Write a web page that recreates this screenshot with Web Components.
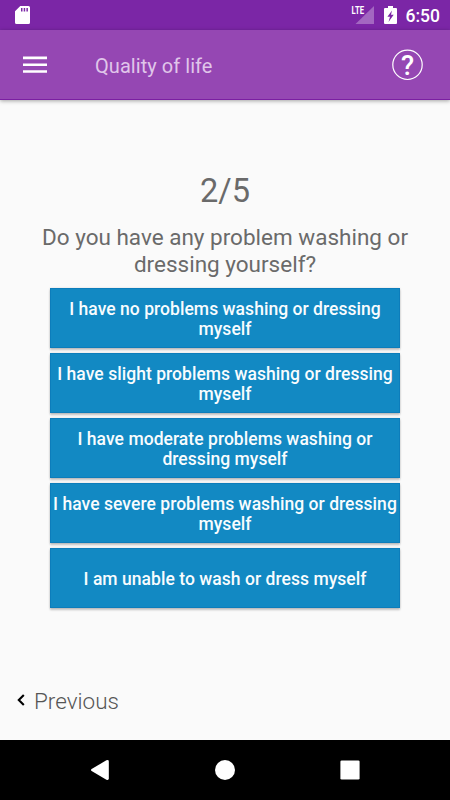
<!DOCTYPE html>
<html lang="en">
<head>
<meta charset="utf-8">
<meta name="viewport" content="width=device-width, initial-scale=1">
<title>Quality of life</title>
<style>
  body {
    margin: 0;
    font-family: Roboto, "Liberation Sans", sans-serif;
    background: #fafafa;
  }
</style>
</head>
<body>
<app-screen>
  <status-bar slot="top" time="6:50"></status-bar>
  <app-toolbar slot="top">Quality of life</app-toolbar>
  <survey-question step="2/5">
    Do you have any problem washing or dressing yourself?
    <answer-button slot="answers">I have no problems washing or dressing myself</answer-button>
    <answer-button slot="answers">I have slight problems washing or dressing myself</answer-button>
    <answer-button slot="answers">I have moderate problems washing or dressing myself</answer-button>
    <answer-button slot="answers">I have severe problems washing or dressing myself</answer-button>
    <answer-button slot="answers">I am unable to wash or dress myself</answer-button>
  </survey-question>
  <previous-link slot="bottom">Previous</previous-link>
  <navigation-bar slot="bottom"></navigation-bar>
</app-screen>

<script>
class BaseElement extends HTMLElement {
  constructor() {
    super();
    const template = document.createElement('template');
    template.innerHTML = this.constructor.markup;
    this.attachShadow({ mode: 'open' });
    this.shadowRoot.appendChild(template.content.cloneNode(true));
  }
}

class AppScreen extends BaseElement {
  static markup = `
    <style>
      :host {
        display: flex;
        flex-direction: column;
        width: 450px;
        height: 800px;
        overflow: hidden;
        background: #fafafa;
      }

      main {
        flex: 1;
        min-height: 0;
      }
    </style>
    <slot name="top"></slot>
    <main><slot></slot></main>
    <slot name="bottom"></slot>
  `;
}

class StatusBar extends BaseElement {
  static markup = `
    <style>
      :host {
        display: flex;
        flex: none;
        align-items: center;
        height: 30px;
        box-sizing: border-box;
        padding: 0 10px 0 15px;
        background: #7b26a6;
        color: #fff;
      }

      svg {
        display: block;
      }

      .signal {
        margin-left: auto;
        overflow: visible;
      }

      .signal text {
        fill: #fff;
        font: 700 11px Roboto, "Liberation Sans", sans-serif;
      }

      .battery {
        margin: 0 9px 0 10px;
      }

      .time {
        font-size: 17.5px;
        font-weight: 500;
        line-height: 30px;
        padding-top: 1px;
      }
    </style>
    <svg width="15" height="18" viewBox="0 0 15 18">
      <path fill="#fff" fill-rule="evenodd" d="M5.3 0H13.5Q15 0 15 1.5V16.5Q15 18 13.5 18H1.5Q0 18 0 16.5V5.3ZM6 2V5.4H7.5V2ZM8.7 2V5.4H10.2V2ZM11.4 2V5.4H12.9V2Z"/>
    </svg>
    <svg class="signal" width="23" height="18" viewBox="0 0 23 18">
      <path fill="#fff" fill-opacity=".3" d="M23 0V18H4.5Z"/>
      <text x=".6" y="8" textLength="12.4" lengthAdjust="spacingAndGlyphs">LTE</text>
    </svg>
    <svg class="battery" width="13" height="18" viewBox="0 0 13 18">
      <path fill="#fff" d="M4 0H9V2H12Q13 2 13 3V17Q13 18 12 18H1Q0 18 0 17V3Q0 2 1 2H4Z"/>
      <path fill="#7b26a6" d="M8 4.4 3.4 10.8H6L4.5 16 9.7 8.8H7Z"/>
    </svg>
    <span class="time"></span>
  `;

  connectedCallback() {
    this.shadowRoot.querySelector('.time').textContent = this.getAttribute('time');
  }
}

class AppToolbar extends BaseElement {
  static markup = `
    <style>
      :host {
        display: flex;
        flex: none;
        align-items: center;
        height: 70px;
        box-sizing: border-box;
        padding: 0 27px 0 23px;
        background: #9547b3;
        border-bottom: 1px solid #7b1fa2;
        box-shadow: 0 1px 4px rgba(0, 0, 0, .35);
        color: #e0c6ea;
        z-index: 1;
      }

      button {
        display: block;
        padding: 0;
        border: 0;
        background: none;
      }

      svg {
        display: block;
        overflow: visible;
      }

      svg text {
        fill: #fff;
        font: 500 27px Roboto, "Liberation Sans", sans-serif;
      }

      h1 {
        flex: 1;
        margin: 0 0 0 48px;
        padding-top: 3px;
        font-size: 20px;
        font-weight: 400;
        line-height: 24px;
        letter-spacing: .05px;
      }
    </style>
    <button aria-label="Menu">
      <svg width="24" height="18" viewBox="0 0 24 18">
        <path fill="#fff" d="M0 .6H24V3.2H0ZM0 7.4H24V10H0ZM0 14.2H24V16.8H0Z"/>
      </svg>
    </button>
    <h1><slot></slot></h1>
    <button aria-label="Help">
      <svg width="31" height="31" viewBox="0 0 31 31">
        <circle cx="15.5" cy="15.8" r="14.7" fill="none" stroke="#fff" stroke-width="1.2"/>
        <text x="15.6" y="25.6" text-anchor="middle">?</text>
      </svg>
    </button>
  `;
}

class SurveyQuestion extends BaseElement {
  static markup = `
    <style>
      :host {
        display: block;
        padding: 70px 30px 0;
        color: #6a6a6a;
        text-align: center;
      }

      .step {
        font-size: 32.5px;
        line-height: 42px;
      }

      h2 {
        margin: 12px 0 11px;
        font-size: 22.5px;
        font-weight: 400;
        line-height: 26.5px;
      }

      .answers {
        display: grid;
        gap: 5px;
        padding: 0 20px;
      }
    </style>
    <div class="step"></div>
    <h2><slot></slot></h2>
    <div class="answers"><slot name="answers"></slot></div>
  `;

  connectedCallback() {
    this.shadowRoot.querySelector('.step').textContent = this.getAttribute('step');
  }
}

class AnswerButton extends BaseElement {
  static markup = `
    <style>
      :host {
        display: block;
      }

      button {
        display: block;
        width: 100%;
        height: 60px;
        padding: 2px 1px 0;
        border: 1px solid #0c7dbb;
        background: #1289c3;
        box-shadow: 0 2px 2px rgba(0, 0, 0, .22), 0 0 2px rgba(0, 0, 0, .12);
        color: #f8fcfe;
        font: 500 17.5px/20px Roboto, "Liberation Sans", sans-serif;
        letter-spacing: .04px;
        text-align: center;
      }
    </style>
    <button><slot></slot></button>
  `;
}

class PreviousLink extends BaseElement {
  static markup = `
    <style>
      :host {
        display: flex;
        flex: none;
        align-items: center;
        gap: 9px;
        height: 78px;
        box-sizing: border-box;
        padding-left: 17px;
        color: #555;
        font-size: 22.5px;
        font-weight: 300;
      }

      svg {
        margin-bottom: 2px;
      }
    </style>
    <svg width="8" height="12" viewBox="0 0 8 12">
      <path fill="none" stroke="#000" stroke-width="2.1" d="M6.8 1 1.8 6 6.8 11"/>
    </svg>
    <span><slot></slot></span>
  `;
}

class NavigationBar extends BaseElement {
  static markup = `
    <style>
      :host {
        display: flex;
        flex: none;
        align-items: center;
        justify-content: center;
        gap: 105px;
        height: 60px;
        background: #000;
      }

      svg {
        display: block;
        fill: #fff;
      }
    </style>
    <svg width="20" height="20" viewBox="0 0 20 20">
      <path d="M1.6 9Q.4 10 1.6 11L16.4 19.7Q18.8 20.6 18.8 18.6V1.4Q18.8-.6 16.4.3Z"/>
    </svg>
    <svg width="20" height="20" viewBox="0 0 20 20">
      <circle cx="10" cy="10" r="10"/>
    </svg>
    <svg width="20" height="20" viewBox="0 0 20 20">
      <rect x=".4" y=".4" width="19.2" height="19.2" rx="1.3"/>
    </svg>
  `;
}

customElements.define('app-screen', AppScreen);
customElements.define('status-bar', StatusBar);
customElements.define('app-toolbar', AppToolbar);
customElements.define('survey-question', SurveyQuestion);
customElements.define('answer-button', AnswerButton);
customElements.define('previous-link', PreviousLink);
customElements.define('navigation-bar', NavigationBar);
</script>
</body>
</html>
